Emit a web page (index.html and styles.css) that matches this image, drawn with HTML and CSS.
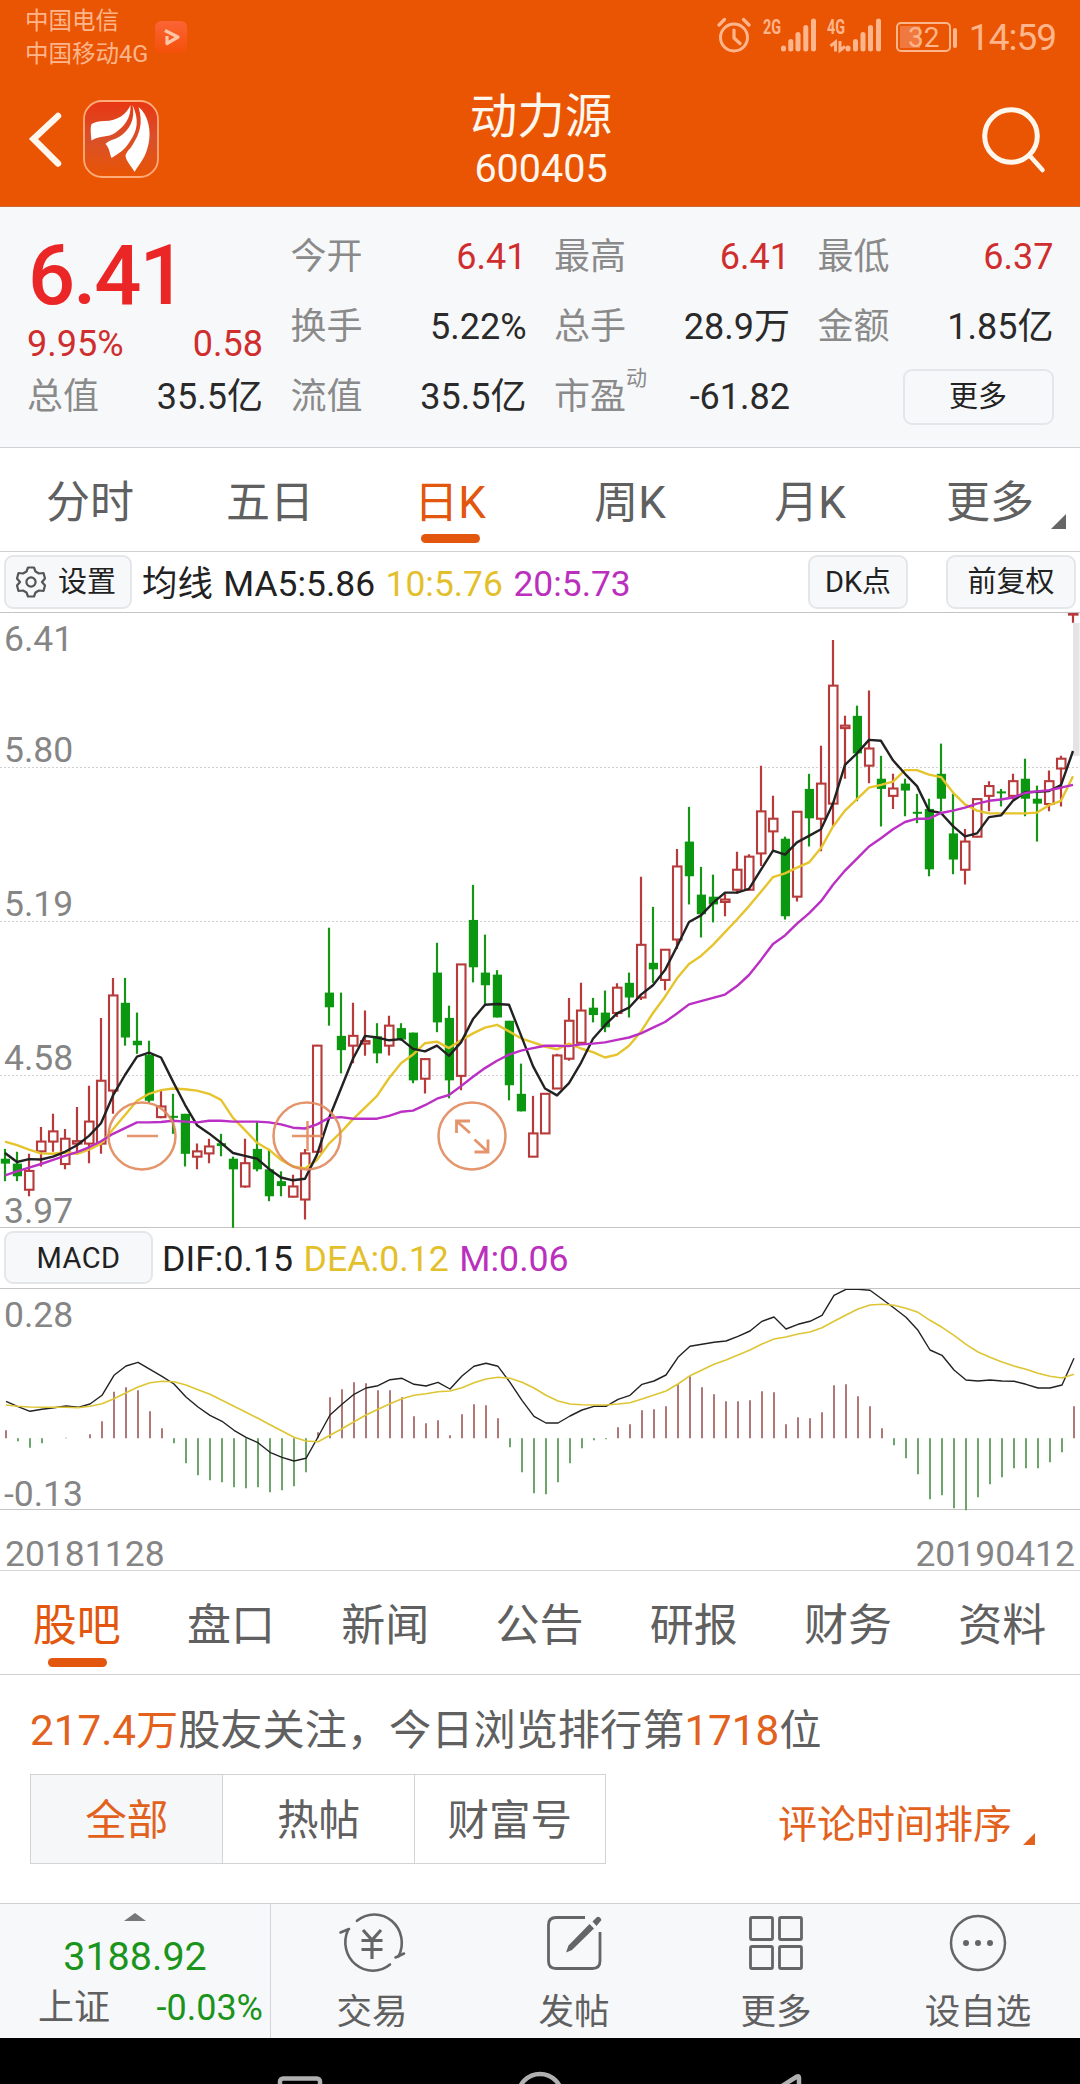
FILE: index.html
```html
<!DOCTYPE html>
<html lang="zh-CN">
<head>
<meta charset="utf-8">
<title>动力源 600405</title>
<link rel="stylesheet" href="styles.css">
</head>
<body>
<div class="app">
  <header class="header">
    <div class="status">
      <div class="carriers"><span>中国电信</span><span>中国移动4G</span></div>
      <svg class="live" width="34" height="34" viewBox="0 0 34 34"><defs><linearGradient id="lg" x2="0" y2="1"><stop offset="0" stop-color="#fb6436"/><stop offset="1" stop-color="#f45008"/></linearGradient></defs><rect x="1" y="1" width="32" height="32" rx="6" fill="url(#lg)"/><path d="M11 10.500 L24 17 L13 23.500 V16" fill="none" stroke="#ffc5a6" stroke-width="3.200" stroke-linejoin="round"/></svg>
      <div class="indicators">
        <svg width="240" height="40" viewBox="0 0 240 40" fill="none" stroke="#ffb58c">
          <circle cx="17" cy="22.500" r="13.500" stroke-width="3"/>
          <path d="M17 15v8l6 5.500M2 10l5.500-5.500M32 10l-5.500-5.500" stroke-width="3.200" stroke-linecap="round"/>
          <g stroke-width="5" stroke-linecap="round"><path d="M66.500 33v1M73.800 26.500v7.500M81 19.500v14.500M88.800 12.500v21.500M96.500 6v28"/><path d="M131 33v1M138.500 26.500v7.500M146 19.500v14.500M153.500 12.500v21.500M161.500 6v28"/></g>
          <path d="M118.500 36.500V27l-5 4M123 26v9.500l5-4" stroke-width="3"/>
          <rect x="180" y="8" width="53" height="28" rx="4" stroke-width="2"/>
          <rect x="183" y="11" width="20" height="22" fill="#f0793f" stroke="none"/>
          <path d="M238 15v16" stroke-width="4" stroke-linecap="round"/>
          <g class="glyphs"><text x="46" y="19">2G</text><text x="110" y="19">4G</text><text class="charge" x="191" y="31.500">32</text></g>
        </svg>
        <span class="clock">14:59</span>
      </div>
    </div>
    <div class="titlebar">
      <svg class="back" width="34" height="58" viewBox="0 0 34 58"><path d="M29 5 4.500 28 29 52.500" fill="none" stroke="#fff7ee" stroke-width="6.500" stroke-linecap="round"/></svg>
      <svg class="logo" width="76" height="78" viewBox="0 0 76 78"><defs><linearGradient id="rg" x2="0" y2="1"><stop offset="0" stop-color="#e83612"/><stop offset=".5" stop-color="#d9502a"/><stop offset="1" stop-color="#e95503"/></linearGradient></defs><rect x="1" y="1" width="74" height="76" rx="18" fill="url(#rg)" stroke="#ffab7c" stroke-width="1.800"/><g fill="#fff"><path d="M47.500 5C44 14 34 21 22 21c-6 0-10 1-13.500 3C7 28 8 35 8.500 40.500 17 35 25 38 32 33 42 26 48 18 47.500 5z"/><path d="M49.500 5c3 14-3 25-12 31-6 4-12 4-15 8 4 4 4 9 6 14 8-5 13-8 18-16 8-11 10-22 3-37z"/><path d="M55.500 7c5 16 1 27-6 38-3 5-6 6-7 11 1 6 6 10 9 16 6-10 11-14 14-28 3-13 0-29-10-37z"/></g></svg>
      <div class="title"><div class="name">动力源</div><div class="code">600405</div></div>
      <svg class="search" width="66" height="68" viewBox="0 0 66 68" fill="none" stroke="#fff7ee" stroke-linecap="round"><circle cx="30" cy="30" r="26.300" stroke-width="5"/><path d="M49 50 61.500 64" stroke-width="4.500"/></svg>
    </div>
  </header>

  <section class="quote">
    <div class="col main">
      <div class="price">6.41</div>
      <div class="pair change"><b>9.95%</b><b>0.58</b></div>
      <div class="pair"><span>总值</span><i>35.5亿</i></div>
    </div>
    <div class="col">
      <div class="pair"><span>今开</span><b>6.41</b></div>
      <div class="pair"><span>换手</span><i>5.22%</i></div>
      <div class="pair"><span>流值</span><i>35.5亿</i></div>
    </div>
    <div class="col">
      <div class="pair"><span>最高</span><b>6.41</b></div>
      <div class="pair"><span>总手</span><i>28.9万</i></div>
      <div class="pair"><span>市盈<sup>动</sup></span><i>-61.82</i></div>
    </div>
    <div class="col">
      <div class="pair"><span>最低</span><b>6.37</b></div>
      <div class="pair"><span>金额</span><i>1.85亿</i></div>
      <div class="pair end"><button class="chip more">更多</button></div>
    </div>
  </section>

  <nav class="tabs period">
    <a>分时</a><a>五日</a><a class="on">日K</a><a>周K</a><a>月K</a><a>更多</a>
    <svg class="corner" width="15" height="15"><path d="M15 0v15H0z" fill="#666"/></svg>
  </nav>

  <div class="tools">
    <button class="chip setting"><svg width="30" height="32" viewBox="-15 -16 30 32" fill="none" stroke="#555" stroke-width="2.200" stroke-linejoin="round"><path d="M-3-14.500H3L4.500-10.500 8-8.500 12.500-9 14-3.500 11 0 14 3.500 12.500 9 8 8.500 4.500 10.500 3 14.500H-3L-4.500 10.500-8 8.500-12.500 9-14 3.500-11 0-14-3.500-12.500-9-8-8.500-4.500-10.500z"/><circle r="4.600"/></svg>设置</button>
    <div class="legend"><span>均线</span><span>MA5:5.86</span><span class="y">10:5.76</span><span class="m">20:5.73</span></div>
    <button class="chip dk">DK点</button>
    <button class="chip fq">前复权</button>
  </div>

  <div class="chart kline">
    <svg id="kline" width="1080" height="615" viewBox="0 0 1080 615"></svg>
    <span class="axis a1">6.41</span><span class="axis a2">5.80</span><span class="axis a3">5.19</span><span class="axis a4">4.58</span><span class="axis a5">3.97</span>
    <svg class="controls" width="400" height="70" viewBox="0 0 400 70" fill="none" stroke="#e28a5c" stroke-width="2.500">
      <circle cx="35" cy="35" r="33.500"/><path d="M20 35h31"/>
      <circle cx="200" cy="35" r="33.500"/><path d="M185 35h31M200.500 20v30"/>
      <circle cx="365" cy="35" r="33.500"/><path d="M363 32 349.500 20M349.500 32V20H363M367.500 38.500 381 51M381 38.500V51H367.500" stroke-width="2.800"/>
    </svg>
  </div>

  <div class="tools second">
    <button class="chip macd">MACD</button>
    <div class="legend"><span>DIF:0.15</span><span class="y">DEA:0.12</span><span class="m">M:0.06</span></div>
  </div>
  <div class="chart macdchart">
    <svg id="macd" width="1080" height="222" viewBox="0 0 1080 222"></svg>
    <span class="axis a6">0.28</span><span class="axis a7">-0.13</span>
  </div>
  <div class="dates"><span>20181128</span><span>20190412</span></div>

  <nav class="tabs info">
    <a class="on">股吧</a><a>盘口</a><a>新闻</a><a>公告</a><a>研报</a><a>财务</a><a>资料</a>
  </nav>
  <section class="forum">
    <p><em>217.4万</em>股友关注，今日浏览排行第<em>1718</em>位</p>
    <div class="filter">
      <div class="segments"><a class="on">全部</a><a>热帖</a><a>财富号</a></div>
      <div class="sort">评论时间排序<svg width="12" height="12"><path d="M12 0v12H0z" fill="#e2611c"/></svg></div>
    </div>
  </section>

  <footer class="bottom">
    <div class="index">
      <svg class="up" width="22" height="8"><path d="M11 0 22 8H0z" fill="#777"/></svg>
      <strong>3188.92</strong>
      <div><span>上证</span><b>-0.03%</b></div>
    </div>
    <a><svg width="68" height="62" viewBox="0 0 68 62" fill="none" stroke="#656565" stroke-width="2.600"><path d="M19 8.800A27.500 28.500 0 0 1 60.500 44.500M52 52.500A27.500 28.500 0 0 1 10 18" stroke-linecap="round"/><path d="M2.500 20.500 11 17M66 41.500 57.500 45.500" stroke-linecap="round"/><path d="M25 18 34 28 43 18M23.500 28.500h21M23.500 37.500h21M34 28v19" stroke-width="3.200"/></svg>交易</a>
    <a><svg width="68" height="62" viewBox="0 0 68 62"><path d="M45 5.500H16Q8.500 5.500 8.500 13V49Q8.500 56.500 16 56.500H52.500Q60 56.500 60 49V20" fill="none" stroke="#656565" stroke-width="2.800"/><g fill="#656565"><path d="M49.500 12 54 16.500 32 38 26 40.500 28.500 33.500z"/><path d="M52.500 9.500 57 5Q60 4 61.500 8L56.500 14z"/></g></svg>发帖</a>
    <a><svg width="68" height="62" viewBox="0 0 68 62" fill="none" stroke="#656565" stroke-width="2.800"><rect x="8.500" y="5.500" width="22" height="22" rx="1.500"/><rect x="37.500" y="5.500" width="22" height="22" rx="1.500"/><rect x="8.500" y="34.500" width="22" height="22" rx="1.500"/><rect x="37.500" y="34.500" width="22" height="22" rx="1.500"/></svg>更多</a>
    <a><svg width="68" height="62" viewBox="0 0 68 62"><circle cx="34" cy="31" r="27" fill="none" stroke="#656565" stroke-width="2.500"/><g fill="#656565"><circle cx="22" cy="31" r="3"/><circle cx="34" cy="31" r="3"/><circle cx="46" cy="31" r="3"/></g></svg>设自选</a>
  </footer>
  <div class="system">
    <svg width="1080" height="46" viewBox="0 0 1080 46" fill="none" stroke="#b0b0b0" stroke-width="4.500"><rect x="280" y="40.500" width="40" height="40" rx="3"/><circle cx="540" cy="58" r="22"/><path d="M771 55 797 38.500Q799 37.500 799 40V80" stroke-linejoin="round"/></svg>
  </div>
</div>
<script src="chart.js"></script>
</body>
</html>
```
FILE: styles.css
```css
* { box-sizing: border-box; }
body { margin: 0; background: #fff; font-family: Roboto, "Noto Sans CJK SC", sans-serif; font-weight: 400; color: #222; }
svg { display: block; flex: none; }
.app { width: 1080px; height: 2084px; overflow: hidden; display: flex; flex-direction: column; }
.app > * { flex: none; }

.header { height: 207px; background: #e95503; border-bottom: 1px solid #c96a38; color: #fff7ee; }
.status { height: 72px; display: flex; padding-left: 25px; color: #ffb58c; }
.carriers { display: flex; flex-direction: column; width: 129px; padding-top: 5px; font-size: 23.500px; line-height: 33px; white-space: nowrap; }
.live { margin-top: 20px; }
.indicators { display: flex; margin-left: auto; padding: 15px 24px 0 0; }
.indicators svg { margin-right: 12px; }
.glyphs { fill: #ffb58c; stroke: none; font-family: "Roboto", sans-serif; }
.glyphs text { font-size: 20px; font-weight: 700; transform-box: fill-box; transform: scaleX(.72); }
.glyphs .charge { font-size: 28px; font-weight: 400; transform: none; }
.clock { font-size: 37px; line-height: 46px; letter-spacing: -1px; }
.titlebar { height: 134px; display: grid; grid-template-columns: 54px 76px 1fr 130px; align-items: start; padding-left: 29px; }
.back { margin-top: 39px; }
.logo { margin-top: 28px; }
.title { text-align: center; padding: 18px 0 0 0; margin-left: -27px; }
.name { font-size: 47.500px; line-height: 55px; }
.code { font-size: 39.500px; line-height: 47px; }
.search { margin: 34px 0 0 31px; }

.quote { height: 241px; background: #f7f8fa; border-bottom: 1px solid #cfd1d4; display: grid; grid-template-columns: repeat(4, 235px); column-gap: 28.500px; padding: 15px 0 0 28px; font-size: 36px; }
.pair { height: 70px; line-height: 71px; display: flex; justify-content: space-between; align-items: baseline; white-space: nowrap; }
.pair span { color: #8a8a8a; position: relative; left: -1px; font-size: 36px; }
.pair b { font-weight: 400; color: #cf2e2e; }
.pair i { font-style: normal; color: #2a2a2a; }
.pair sup { position: absolute; left: 100%; top: 1px; font-size: 21px; line-height: 30px; }
.price { height: 104px; padding-top: 4px; font-size: 83px; line-height: 100px; font-weight: 500; color: #ea2626; letter-spacing: -2px; }
.main .change { height: 36px; line-height: 36px; }
.main .change b:first-child { margin-left: -1px; }
.pair.end { justify-content: flex-end; align-items: center; }
.chip { border: 2px solid #e4e6ea; border-radius: 9px; background: #f7f8fa; color: #222; font: 400 29px/48px Roboto, "Noto Sans CJK SC", sans-serif; padding: 0; display: flex; align-items: center; justify-content: center; }
.more { width: 151px; height: 56px; }

.tabs { display: grid; position: relative; font-size: 44px; color: #606060; border-bottom: 1px solid #cfd1d4; }
.tabs a { position: relative; text-align: center; }
.tabs .on { color: #e2560d; }
.tabs .on::after { content: ""; position: absolute; left: 50%; bottom: 14px; width: 59px; height: 9px; margin-left: -29px; border-radius: 4.500px; background: #e2560d; }
.period { height: 104px; grid-template-columns: repeat(6, 1fr); line-height: 110px; }
.period .on::after { bottom: 15px; }
.corner { position: absolute; right: 14px; bottom: 22px; }

.tools { height: 61px; display: flex; align-items: flex-start; padding: 3px 4px 0; border-bottom: 1.500px solid #c4c4c4; }
.tools .chip { height: 54px; }
.setting { width: 128px; gap: 12px; padding-right: 4px; }
.legend { display: flex; gap: 10.500px; font-size: 35.400px; line-height: 58px; margin-left: 10px; }
.y { color: #e4bf2c; }
.m { color: #bb2fbd; }
.dk { width: 100px; margin-left: auto; }
.fq { width: 130px; margin-left: 38px; }
.macd { width: 149px; letter-spacing: .5px; }

.chart { position: relative; }
.kline { height: 614px; }
.axis { position: absolute; left: 4px; font-size: 35.500px; line-height: 40px; color: #858585; }
.a1 { top: 6px; } .a2 { top: 117px; } .a3 { top: 271px; } .a4 { top: 425px; } .a5 { top: 578px; }
.controls { position: absolute; left: 107px; top: 488px; opacity: .9; }
.second { height: 62px; border-top: 1.500px solid #c4c4c4; }
.second .chip { height: 53px; }
.second .legend { margin-left: 9px; font-size: 35.700px; line-height: 57px; }
.macdchart { height: 221px; border-bottom: 1.500px solid #c4c4c4; }
.a6 { top: 6px; } .a7 { top: 185px; }
.dates { height: 61px; display: flex; justify-content: space-between; padding: 14px 5px 0; font-size: 35.500px; line-height: 60px; color: #858585; border-bottom: 1px solid #d8d8d8; }

.info { height: 104px; grid-template-columns: repeat(7, 1fr); font-size: 44px; line-height: 110px; }
.info a { left: -.5px; }
.forum { height: 228px; padding: 24px 30px 0; color: #606060; }
.forum p { margin: 0; font-size: 42.200px; line-height: 63px; white-space: nowrap; }
.forum em { font-style: normal; color: #e2611c; }
.filter { display: flex; justify-content: space-between; align-items: flex-start; margin-top: 12px; }
.segments { display: grid; grid-template-columns: repeat(3, 1fr); width: 576px; border: 1px solid #d3d3d3; height: 90px; font-size: 41.500px; line-height: 92px; text-align: center; }
.segments a { height: 88px; }
.segments a + a { border-left: 1px solid #d3d3d3; }
.segments .on { background: #f5f7f9; color: #e2611c; }
.sort { display: flex; font-size: 39px; line-height: 103px; color: #e2611c; margin-right: 15px; gap: 11px; }
.sort svg { margin-top: 59px; }

.bottom { height: 135px; background: #f7f8fa; border-top: 1px solid #d0d0d0; display: grid; grid-template-columns: 271px repeat(4, 202px); color: #606060; font-size: 35.500px; }
.bottom a { display: flex; flex-direction: column; align-items: center; line-height: 46px; padding-top: 8px; gap: 15px; }
.index { border-right: 1px solid #d3d5d9; text-align: center; padding-top: 9px; display: flex; flex-direction: column; align-items: center; }
.index strong { font-weight: 400; font-size: 39.500px; line-height: 46px; color: #1b941b; margin-top: 13px; }
.index div { display: flex; justify-content: space-between; width: 100%; padding: 0 7px 0 38px; line-height: 56px; font-size: 36px; }
.index b { font-weight: 400; color: #1b941b; }
.system { height: 46px; background: #000; }
```
FILE: chart.js
```js
const STEP = 12;
const UNIT = 1 / 2.45;
const ky = v => (v - 30) * UNIT;

// Each candle: direction, high, body top, body bottom, low.
const candles = `
G 1343 1367 1379 1422|G 1350 1379 1410 1422|R 1355 1397 1443 1459|R 1289 1325 1349 1386|R 1257 1300 1325 1350|R 1294 1318 1380 1393
R 1240 1324 1330 1355|R 1188 1276 1330 1378|R 1022 1176 1330 1355|R 924 967 1200 1257|G 924 985 1070 1090|G 1009 1078 1089 1110
G 1078 1113 1225 1230|R 1200 1239 1265 1268|G 1208 1262 1266 1306|G 1257 1257 1355 1386|R 1330 1349 1362 1393|R 1318 1337 1354 1378
G 1306 1329 1336 1361|G 1362 1367 1393 1536|R 1318 1378 1435 1438|G 1276 1343 1393 1398|G 1343 1393 1459 1471|G 1398 1422 1434 1459
R 1406 1435 1460 1462|R 1343 1354 1467 1516|R 1088 1090 1350 1350|G 801 960 996 1041|G 960 1066 1101 1158|R 985 1066 1090 1133
R 1004 1079 1085 1115|G 1035 1067 1109 1133|R 1017 1041 1090 1114|G 1035 1047 1075 1078|G 1058 1058 1175 1182|R 1121 1123 1171 1207
G 838 911 1033 1057|G 992 1022 1175 1219|R 890 891 1164 1199|G 696 782 898 935|G 818 911 942 990|G 905 916 1021 1021
G 1029 1029 1187 1224|G 1134 1208 1251 1251|R 1213 1305 1362 1362|R 1207 1208 1305 1305|R 1110 1114 1195 1195|R 973 1029 1122 1127
R 936 1004 1083 1084|G 973 997 1015 1033|G 955 1009 1045 1057|R 937 948 1010 1020|G 911 936 972 1021|R 676 843 972 978
G 750 887 903 936|R 854 855 929 954|R 608 651 830 853|G 505 590 675 744|G 652 720 768 825|G 671 725 744 788
R 718 732 738 773|R 615 659 708 718|R 621 627 708 710|R 404 516 619 650|R 478 534 565 612|G 578 583 773 781
R 516 517 725 737|G 424 461 533 602|R 355 448 534 614|R 96 208 497 552|R 282 306 312 436|G 257 282 374 491
R 220 362 404 447|G 380 436 461 553|R 424 460 478 510|G 436 448 465 528|G 473 517 521 545|G 485 510 658 675
G 350 424 485 516|G 473 570 634 670|R 559 590 659 695|R 485 486 578 580|R 442 454 478 516|G 461 467 472 504
R 424 442 478 487|G 387 436 485 528|G 453 485 497 590|R 416 442 498 516|R 380 387 411 504|R 30 30 34 54
`.trim().split(/[|\n]/).map(s => s.split(' '));

const ma5 = [1353,1375,1368,1369,1362,1350,1334,1311,1280,1212,1162,1117,1107,1119,1178,1235,1285,1305,1328,1353,1360,1367,1392,1413,1420,1416,1357,1268,1195,1122,1066,1070,1077,1074,1098,1104,1090,1115,1082,1025,990,988,990,1065,1140,1195,1212,1182,1132,1073,1040,1011,997,965,942,905,847,787,771,740,715,715,706,659,612,622,592,576,560,497,402,374,341,343,391,424,454,514,520,552,577,570,530,526,490,469,468,466,452,368];
const ma10 = [1325,1334,1345,1354,1355,1351,1355,1345,1330,1295,1260,1225,1208,1199,1195,1197,1200,1208,1223,1267,1297,1328,1345,1370,1386,1391,1370,1330,1302,1270,1242,1213,1170,1133,1112,1084,1080,1096,1077,1060,1046,1039,1055,1072,1082,1092,1099,1085,1097,1106,1119,1112,1090,1055,1010,970,925,890,870,843,812,781,748,713,677,668,654,641,606,553,514,486,458,451,443,415,415,426,432,470,499,514,521,521,521,521,519,501,490,430];
const ma20 = [1408,1398,1389,1380,1370,1360,1351,1339,1324,1306,1292,1278,1278,1277,1274,1276,1278,1274,1274,1276,1276,1276,1278,1283,1291,1293,1283,1267,1265,1269,1269,1269,1262,1252,1249,1236,1220,1211,1189,1166,1145,1127,1112,1102,1096,1090,1090,1091,1087,1085,1082,1076,1070,1060,1046,1032,1011,989,981,973,965,944,917,880,841,820,791,766,736,696,661,632,602,582,560,542,534,534,520,514,507,497,490,487,482,471,467,464,458,451];

const line = (data, fy, x0, color, w) =>
  `<polyline points="${data.map((v, i) => `${x0 + i * STEP},${fy(v).toFixed(1)}`).join(' ')}" fill="none" stroke="${color}" stroke-width="${w}" stroke-linejoin="round"/>`;

let k = '';
for (const y of [154.5, 308.5, 462.5]) k += `<path d="M0 ${y}H1080" stroke="#d0d0d0" stroke-dasharray="2 2"/>`;
k += '<rect x="1073" y="10" width="6.5" height="133" fill="#e4e4e4"/>';
candles.forEach(([dir, ...v], i) => {
  const x = 5 + i * STEP;
  const [h, t, b, l] = v.map(n => ky(+n));
  if (dir === 'G') {
    k += `<path d="M${x} ${h}V${l}" stroke="#169616" stroke-width="2.2"/><rect x="${x - 4.2}" y="${t}" width="9.2" height="${Math.max(2, b - t)}" fill="#0b970f"/>`;
  } else {
    k += `<path d="M${x} ${h}V${t}M${x} ${b}V${l}" stroke="#b73b3b" stroke-width="2.2"/><rect x="${x - 4}" y="${t}" width="8.5" height="${b - t}" fill="none" stroke="#b73b3b" stroke-width="2.1"/>`;
  }
});
k += line(ma10, ky, 5, '#e6c42d', 2.4) + line(ma5, ky, 5, '#222', 2.4) + line(ma20, ky, 5, '#bb2fc4', 2.4);
document.getElementById('kline').innerHTML = k;

const my = v => (v - 206) / 3;
const bars = [630,663,682,669,654,652,654,642,603,514,501,510,573,624,669,729,765,780,786,801,804,801,816,810,798,756,636,531,507,486,489,510,510,531,588,609,600,645,582,552,555,594,681,756,819,822,786,729,684,660,657,621,612,570,567,558,491,468,501,522,543,543,540,513,516,612,591,594,576,495,492,528,558,624,675,714,762,837,825,864,870,831,792,771,744,744,744,726,696,558];
const dif = [543,559,573,567,562,557,561,551,525,465,437,426,447,468,491,530,560,585,603,630,651,667,696,711,722,714,650,584,552,522,503,496,478,474,492,497,486,506,467,438,429,438,486,540,588,608,608,587,569,558,558,537,525,492,482,464,411,378,372,366,362,348,332,303,290,326,312,303,285,225,207,207,210,236,263,291,330,389,405,449,479,482,479,482,483,492,503,503,494,414];
const dea = [554,558,560,561,561,561,562,558,550,535,517,500,487,483,484,494,508,522,540,558,576,594,613,632,651,662,664,645,625,604,584,567,550,535,525,520,514,512,502,487,476,471,474,486,503,525,542,551,553,554,554,551,547,536,524,512,491,466,449,432,419,404,389,371,356,350,341,335,322,303,284,266,254,252,255,264,276,300,321,345,372,395,411,425,437,447,459,468,473,462];
let m = '';
bars.forEach((v, i) => {
  if (v !== 654) m += `<path d="M${6 + i * STEP} ${my(654)}V${my(v)}" stroke="${v < 654 ? '#a76a6a' : '#5b9c5b'}" stroke-width="1.8"/>`;
});
m += line(dif, my, 6, '#222', 1.4) + line(dea, my, 6, '#ddc533', 1.6);
document.getElementById('macd').innerHTML = m;
```
